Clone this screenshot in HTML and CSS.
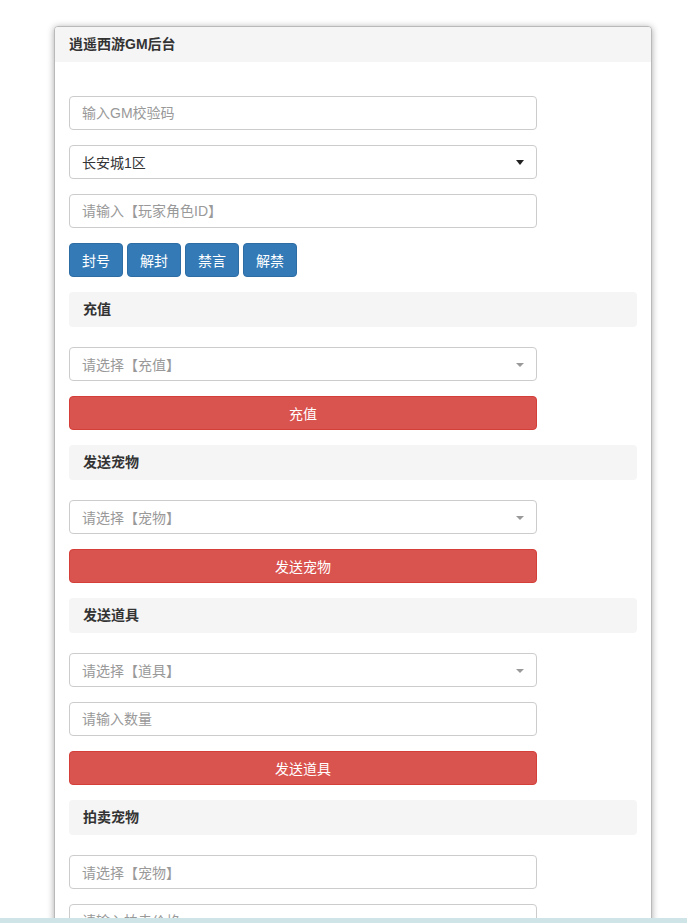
FILE: index.html
```html
<!DOCTYPE html>
<html lang="zh">
<head>
<meta charset="utf-8">
<title>逍遥西游GM后台</title>
<link rel="stylesheet" href="styles.css">
</head>
<body>
<div class="panel">
  <div class="panel-heading">逍遥西游GM后台</div>
  <div class="panel-body">
    <div class="form">
      <input class="control" type="text" placeholder="输入GM校验码">
      <div class="control select native"><span class="value">长安城1区</span><span class="caret dark"></span></div>
      <input class="control" type="text" placeholder="请输入【玩家角色ID】">
      <div class="btn-row">
        <button class="btn blue">封号</button>
        <button class="btn blue">解封</button>
        <button class="btn blue">禁言</button>
        <button class="btn blue">解禁</button>
      </div>

      <div class="section">充值</div>
      <div class="control select"><span class="ph">请选择【充值】</span><span class="caret"></span></div>
      <button class="control btn red">充值</button>

      <div class="section">发送宠物</div>
      <div class="control select"><span class="ph">请选择【宠物】</span><span class="caret"></span></div>
      <button class="control btn red">发送宠物</button>

      <div class="section">发送道具</div>
      <div class="control select"><span class="ph">请选择【道具】</span><span class="caret"></span></div>
      <input class="control" type="text" placeholder="请输入数量">
      <button class="control btn red">发送道具</button>

      <div class="section">拍卖宠物</div>
      <div class="control select"><span class="ph">请选择【宠物】</span></div>
      <input class="control" type="text" placeholder="请输入拍卖价格">
      <button class="control btn red">拍卖宠物</button>
    </div>
  </div>
</div>
<div class="bottom-bar"></div>
</body>
</html>
```

FILE: styles.css
```css
html, body {
  margin: 0;
  padding: 0;
  background: #fff;
}
body {
  font-family: "Liberation Sans", "Noto Sans CJK SC", sans-serif;
  font-size: 14px;
  color: #333;
}
.panel {
  width: 596px;
  margin: 26px 0 0 54px;
  border: 1px solid #b9b9b9;
  border-radius: 4px;
  background: #fff;
  box-shadow: 0 1px 7px rgba(0, 0, 0, 0.35);
}
.panel-heading {
  height: 35px;
  line-height: 35px;
  padding: 0 14px;
  background: #f5f5f5;
  border-radius: 3px 3px 0 0;
  font-weight: bold;
  font-size: 14px;
  color: #333;
}
.panel-body {
  padding: 34px 14px 15px;
}
.form {
  display: flex;
  flex-direction: column;
  align-items: flex-start;
}
.control {
  box-sizing: border-box;
  width: 468px;
  height: 34px;
  margin: 0 0 15px;
  padding: 0 12px;
  border: 1px solid #ccc;
  border-radius: 4px;
  background: #fff;
  font-family: inherit;
  font-size: 14px;
  color: #333;
  outline: none;
}
input.control::placeholder {
  color: #999;
}
.select {
  display: flex;
  align-items: center;
  justify-content: space-between;
}
.select .ph {
  color: #999;
}
.select .value {
  color: #333;
}
.caret {
  width: 0;
  height: 0;
  border-left: 4px solid transparent;
  border-right: 4px solid transparent;
  border-top: 4px solid #999;
  margin-top: 1px;
}
.caret.dark {
  border-top: 5px solid #222;
  margin-top: 0;
}
.btn-row {
  display: flex;
  gap: 4px;
  margin-bottom: 15px;
}
.btn {
  box-sizing: border-box;
  height: 34px;
  padding: 0 12px;
  border-radius: 4px;
  font-family: inherit;
  font-size: 14px;
  color: #fff;
  cursor: pointer;
}
.btn.blue {
  width: 54px;
  padding: 0;
  background: #337ab7;
  border: 1px solid #2e6da4;
}
.btn.red {
  background: #d9534f;
  border: 1px solid #d43f3a;
  text-align: center;
}
.section {
  box-sizing: border-box;
  align-self: stretch;
  height: 35px;
  line-height: 35px;
  margin-bottom: 20px;
  padding: 0 14px;
  background: #f5f5f5;
  border-radius: 4px;
  font-weight: bold;
  color: #333;
}
.bottom-bar {
  position: fixed;
  left: 0;
  right: 0;
  bottom: 0;
  height: 5px;
  background: #cfe4e6;
}
```
